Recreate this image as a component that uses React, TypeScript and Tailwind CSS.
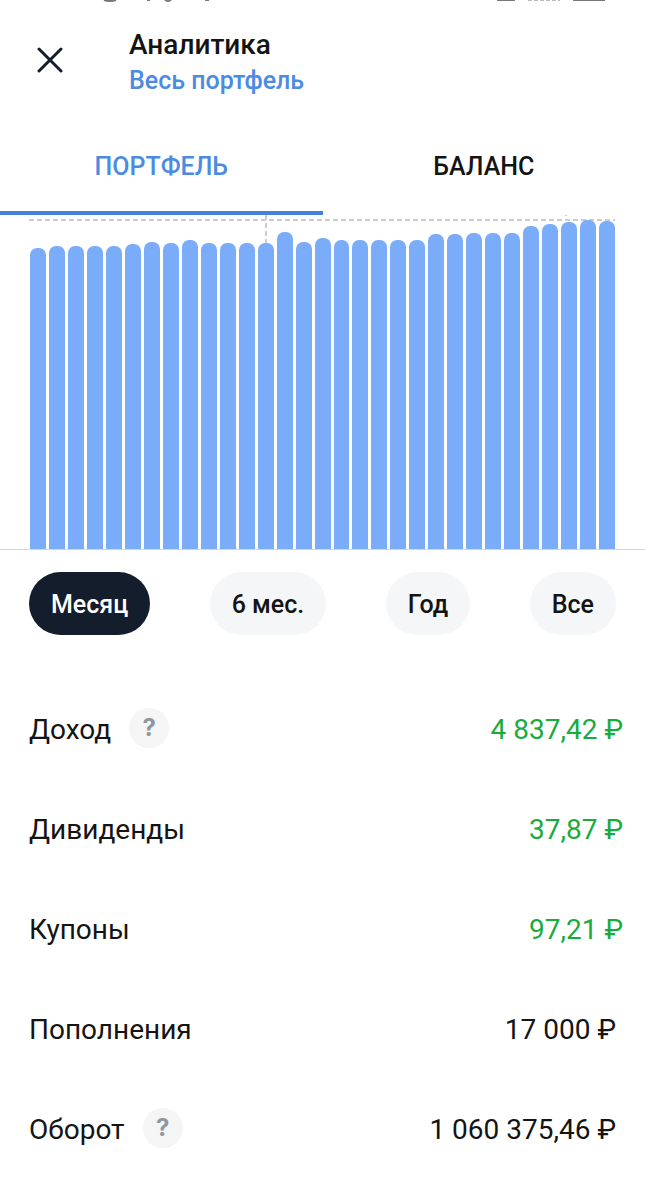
import React from 'react'

type RowType = {
    label: string;
    value: string;
    positive?: boolean;
    hint?: boolean;
}

const BARS = [
    301, 303, 303, 303, 303, 305, 307, 306, 309, 306, 306, 306, 306, 317, 307,
    311, 309, 309, 309, 309, 309, 315, 315, 316, 316, 316, 323, 325, 327, 329, 328,
];

const PERIODS = ['Месяц', '6 мес.', 'Год', 'Все'];

const ROWS: RowType[] = [
    { label: 'Доход', value: '4 837,42 ₽', positive: true, hint: true },
    { label: 'Дивиденды', value: '37,87 ₽', positive: true },
    { label: 'Купоны', value: '97,21 ₽', positive: true },
    { label: 'Пополнения', value: '17 000 ₽' },
    { label: 'Оборот', value: '1 060 375,46 ₽', hint: true },
];

function StatusBar() {
    return (
        <div className="flex h-[2px] items-end justify-between overflow-hidden pl-[102px] pr-[38px]">
            <svg className="h-[2px] w-[120px]" viewBox="0 0 120 2" fill="none" stroke="#777777" strokeWidth="2">
                <path d="M2 0q6 2 12 0M45 0h3M63 0q3 2 6 0M103 0h4" />
            </svg>
            <svg className="h-[2px] w-[110px]" viewBox="0 0 110 2" fill="none" stroke="#777777" strokeWidth="2">
                <path d="M0 0h18M76 0h32" />
                <path d="M31 0h32" stroke="#bbbbbb" strokeDasharray="4 2" />
            </svg>
        </div>
    )
}

function Header() {
    return (
        <header className="flex h-[128px] items-start pl-[29px] pt-[25px]">
            <button type="button" aria-label="Закрыть" className="mr-[58px] mt-3 flex size-[42px] items-center justify-center">
                <svg viewBox="0 0 26 26" className="size-[26px]" fill="none" stroke="#141d2b" strokeWidth="3" strokeLinecap="round">
                    <path d="M2 2l22 22M24 2L2 24" />
                </svg>
            </button>
            <div>
                <h1 className="text-[28px] font-medium leading-[36px]">Аналитика</h1>
                <a href="#portfolio" className="block text-[25px] font-medium leading-[36px] text-[#4c8be2]">Весь портфель</a>
            </div>
        </header>
    )
}

function Tabs() {
    const [ tab, setTab ] = React.useState<number>(0);
    return (
        <div role="tablist" className="flex">
            {['ПОРТФЕЛЬ', 'БАЛАНС'].map((name, i) => (
                <button
                    key={name}
                    type="button"
                    role="tab"
                    aria-selected={tab===i}
                    onClick={()=>setTab(i)}
                    className={`h-[85px] flex-1 border-b-4 pb-2 text-[25px] font-medium leading-[32px]
                    ${tab===i ? 'border-[#4581dc] text-[#4c8be2]' : 'border-transparent'}`}
                >
                    {name}
                </button>
            ))}
        </div>
    )
}

function Chart() {
    return (
        <div className="relative flex h-[335px] items-end gap-[3px] border-b border-[#d8d8d8] px-[30px]">
            <svg className="absolute left-0 top-0 h-[30px] w-full" stroke="#cccccc" strokeWidth="2" strokeDasharray="5 3">
                <line x1="29" y1="5" x2="615" y2="5" />
                <line x1="266" y1="0" x2="266" y2="28" />
                <line x1="566" y1="0" x2="566" y2="1" />
            </svg>
            {BARS.map((h, i) => (
                <div key={i} className="relative flex-1 rounded-t-[7px] bg-[#7aacfa]" style={{ height: h }} />
            ))}
        </div>
    )
}

function Periods() {
    const [ period, setPeriod ] = React.useState<number>(0);
    return (
        <div className="flex justify-between px-[29px] pt-[22px]">
            {PERIODS.map((name, i) => (
                <button
                    key={name}
                    type="button"
                    onClick={()=>setPeriod(i)}
                    className={`h-[63px] rounded-full px-[22px] pt-[2px] text-[25px] font-medium
                    ${period===i ? 'bg-[#141d2b] text-white' : 'bg-[#f5f6f8]'}`}
                >
                    {name}
                </button>
            ))}
        </div>
    )
}

function Row({ label, value, positive, hint }: RowType) {
    return (
        <div className="flex h-[100px] items-center text-[28px]">
            <dt className="flex items-center gap-[18px]">
                {label}
                {hint &&
                    <button
                        type="button"
                        aria-label={`Подробнее: ${label}`}
                        className="mb-1 flex size-[40px] items-center justify-center rounded-full
                        bg-[#f5f5f5] font-[Inter,sans-serif] text-[24px] font-bold leading-none text-[#91959f]"
                    >
                        ?
                    </button>
                }
            </dt>
            <dd className={positive ? 'ml-auto text-[#19ab3c]' : 'ml-auto pr-[7px]'}>{value}</dd>
        </div>
    )
}

export default function App() {
    return (
        <main className="min-h-screen bg-white font-[Roboto,'Liberation_Sans',sans-serif] text-[#141414]">
            <StatusBar />
            <Header />
            <Tabs />
            <Chart />
            <Periods />
            <dl className="pl-[29px] pr-[22px] pt-[45px]">
                {ROWS.map((row) => <Row key={row.label} {...row} />)}
            </dl>
        </main>
    )
}
